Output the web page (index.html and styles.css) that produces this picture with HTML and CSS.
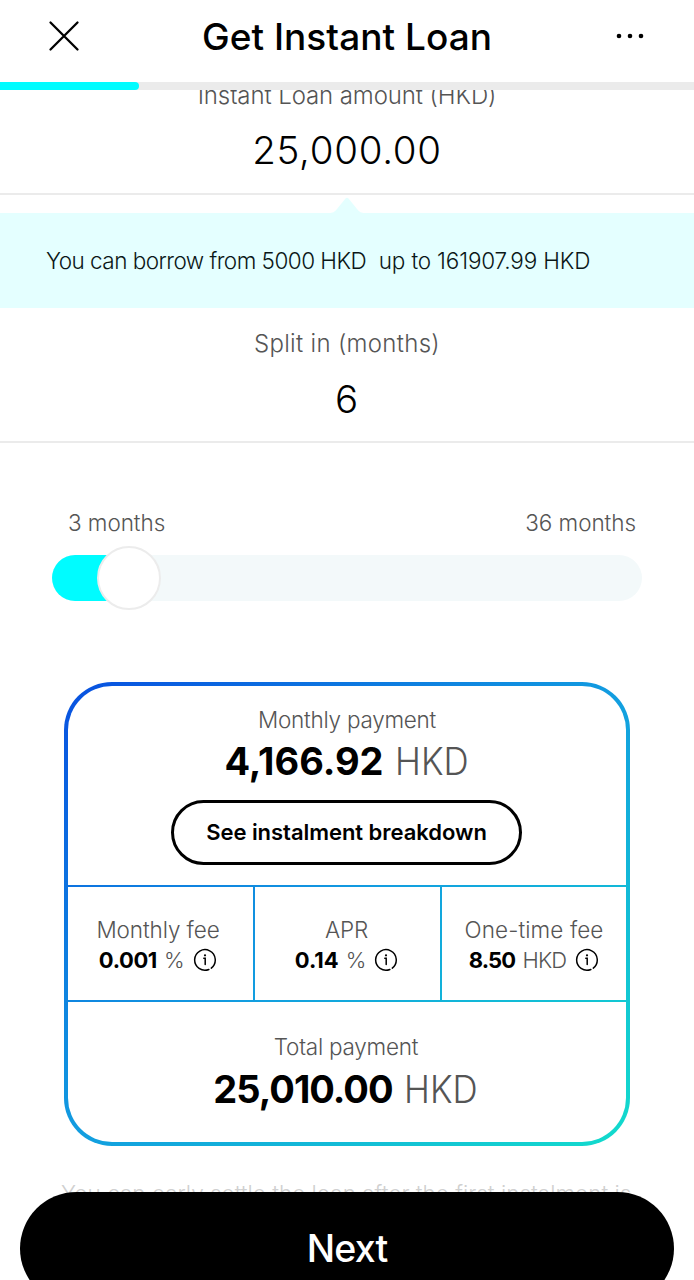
FILE: index.html
```html
<!DOCTYPE html>
<html lang="en">
<head>
<meta charset="utf-8">
<title>Get Instant Loan</title>
<link rel="stylesheet" href="styles.css">
</head>
<body>
<div class="screen">
  <header class="header">
    <svg class="close" viewBox="0 0 32 32"><path d="M2.500 2.500 29.500 29.500M29.500 2.500 2.500 29.500"/></svg>
    <h1 class="title">Get Instant Loan</h1>
    <svg class="more" viewBox="0 0 32 8"><circle cx="5" cy="4" r="2.3"/><circle cx="16" cy="4" r="2.3"/><circle cx="27" cy="4" r="2.3"/></svg>
  </header>
  <div class="progress"><div class="progress-fill"></div></div>
  <main class="content">
    <section class="field amount">
      <div class="label">Instant Loan amount (HKD)</div>
      <div class="value">25,000.00</div>
    </section>
    <svg class="pointer" viewBox="0 0 36 18"><path d="M0 18C4 18 5.500 17 8 14L16.500 3.500Q18 2 19.500 3.500L28 14C30.500 17 32 18 36 18Z"/></svg>
    <section class="banner"><span class="from">You can borrow from 5000 HKD&nbsp; </span><span class="upto">up to 161907.99 HKD</span></section>
    <section class="field months">
      <div class="label">Split in (months)</div>
      <div class="value">6</div>
    </section>
    <section class="range">
      <div class="range-labels"><span>3 months</span><span>36 months</span></div>
      <div class="track"><div class="track-fill"></div><div class="knob"></div></div>
    </section>
    <section class="card">
      <div class="cell monthly">
        <div class="small">Monthly payment</div>
        <div class="big"><b>4,166.92</b><span>HKD</span></div>
        <div class="breakdown">See instalment breakdown</div>
      </div>
      <div class="fees">
        <div class="cell fee">
          <div class="small">Monthly fee</div>
          <div class="rate"><b>0.001</b><span class="unit">%</span><svg class="info" viewBox="0 0 24 24"><path d="M15.900 21.500A10.300 10.300 0 1 1 18.300 20.100"/><path d="M10.800 10.300H12.200V16.500"/><circle cx="12" cy="7.300" r="1.100"/></svg></div>
        </div>
        <div class="cell fee apr">
          <div class="small">APR</div>
          <div class="rate"><b>0.14</b><span class="unit">%</span><svg class="info" viewBox="0 0 24 24"><path d="M15.900 21.500A10.300 10.300 0 1 1 18.300 20.100"/><path d="M10.800 10.300H12.200V16.500"/><circle cx="12" cy="7.300" r="1.100"/></svg></div>
        </div>
        <div class="cell fee once">
          <div class="small">One-time fee</div>
          <div class="rate"><b>8.50</b><span class="unit">HKD</span><svg class="info" viewBox="0 0 24 24"><path d="M15.900 21.500A10.300 10.300 0 1 1 18.300 20.100"/><path d="M10.800 10.300H12.200V16.500"/><circle cx="12" cy="7.300" r="1.100"/></svg></div>
        </div>
      </div>
      <div class="cell total">
        <div class="small">Total payment</div>
        <div class="big"><b>25,010.00</b><span>HKD</span></div>
      </div>
    </section>
    <p class="note">You can early settle the loan after the first instalment is</p>
  </main>
  <div class="next">Next</div>
</div>
</body>
</html>
```
FILE: styles.css
```css
* { box-sizing: border-box; }
body { margin: 0; background: #fff; color: #000; font-family: Inter, "Liberation Sans", sans-serif; font-weight: 300; }
.screen { position: relative; width: 694px; height: 1280px; overflow: hidden; display: flex; flex-direction: column; background: #fff; white-space: nowrap; }

.header { flex: none; height: 82px; padding: 0 48px; display: flex; justify-content: space-between; align-items: flex-start; }
.close { width: 32px; height: 32px; margin-top: 20px; fill: none; stroke: #000; stroke-width: 2.3; stroke-linecap: round; }
.title { margin: 0; font-size: 37px; line-height: 73px; font-weight: 500; letter-spacing: 0.03px; }
.more { width: 32px; height: 8px; margin-top: 32px; fill: #000; }

.progress { flex: none; height: 8px; background: #ebebeb; }
.progress-fill { width: 139px; height: 8px; background: #00fcff; border-radius: 0 4px 4px 0; }

.content { flex: 1; overflow: hidden; display: flex; flex-direction: column; }
.field { flex: none; text-align: center; border-bottom: 2px solid #ebebeb; }
.amount { height: 105px; }
.label { font-size: 24px; line-height: 30px; color: #555; letter-spacing: 0.3px; }
.amount .label { margin-top: -9px; letter-spacing: -0.1px; }
.value { font-size: 38.500px; line-height: 50px; margin-top: 14px; letter-spacing: 0.7px; }
.pointer { flex: none; width: 36px; height: 18px; margin: 0 auto; fill: #e4ffff; }
.banner { flex: none; height: 95px; padding-left: 46px; font-size: 22.500px; line-height: 96px; background: #e4ffff; color: #0b1717; }
.from { letter-spacing: -0.53px; }
.upto { letter-spacing: -0.15px; margin-left: 1px; }
.months { height: 135px; padding-top: 21px; }
.months .value { margin-top: 15px; }

.range { flex: none; padding: 65px 52px 0; }
.range-labels { display: flex; justify-content: space-between; padding: 0 6px 0 16px; font-size: 22.500px; line-height: 30px; letter-spacing: -0.06px; color: #555; }
.track { display: flex; align-items: center; margin-top: 17px; height: 46px; border-radius: 23px; background: #f3f9fa; }
.track-fill { width: 76px; height: 46px; border-radius: 23px 0 0 23px; background: #00fcff; }
.knob { width: 64px; height: 64px; margin-left: -31px; border-radius: 50%; border: 2px solid #ececec; background: #fff; }

.card { flex: none; width: 566px; height: 464px; margin: 81px auto 0; padding: 4px; border-radius: 48px; background: linear-gradient(to bottom right, #0850e0, #129de0 50%, #12dccc); display: grid; grid-template-rows: 199px 113px 140px; gap: 2px; text-align: center; }
.cell { background: #fff; }
.monthly { border-radius: 44px 44px 0 0; padding-top: 19px; }
.small { font-size: 22.500px; line-height: 30px; color: #555; letter-spacing: -0.25px; }
.big { display: flex; justify-content: center; gap: 11px; font-size: 38px; line-height: 50px; }
.big b, .rate b { font-weight: 700; color: #000; }
.big span { color: #555; transform: scaleX(0.92); transform-origin: left; margin-right: -5px; }
.monthly .big { margin-top: 1px; }
.breakdown { width: 351px; height: 65px; margin: 14px 0 0 103px; border: 3px solid #000; border-radius: 33px; font-size: 22px; line-height: 59px; font-weight: 600; letter-spacing: -0.04px; }
.fees { display: grid; grid-template-columns: 185px 185px 184px; gap: 2px; }
.fee { padding-top: 28px; padding-right: 5px; }
.fee .small { letter-spacing: -0.1px; }
.apr { padding-right: 2px; }
.once { padding-right: 0; }
.once .small { letter-spacing: 0.1px; }
.rate { display: flex; justify-content: center; align-items: center; height: 30px; font-size: 22px; color: #555; letter-spacing: -0.4px; }
.apr .rate { letter-spacing: 0; }
.once .rate { letter-spacing: -0.8px; }
.unit { margin-left: 7px; }
.info { width: 24px; height: 24px; margin-left: 9px; fill: #000; }
.apr .info { margin-left: 8px; }
.info path { fill: none; stroke: #000; stroke-width: 1.500; stroke-linecap: round; }
.total { border-radius: 0 0 44px 44px; padding: 30px 2px 0 0; }
.total .big { margin-top: 2px; gap: 11px; }
.total b { letter-spacing: -1px; }

.note { flex: none; margin: 33px 0 0 61px; font-size: 22.500px; line-height: 30px; color: #d0d0d0; }
.next { position: absolute; left: 20px; top: 1192px; width: 654px; height: 113px; border-radius: 57px; background: #000; color: #fff; text-align: center; font-size: 37.500px; line-height: 114px; font-weight: 450; letter-spacing: -0.8px; }
```
